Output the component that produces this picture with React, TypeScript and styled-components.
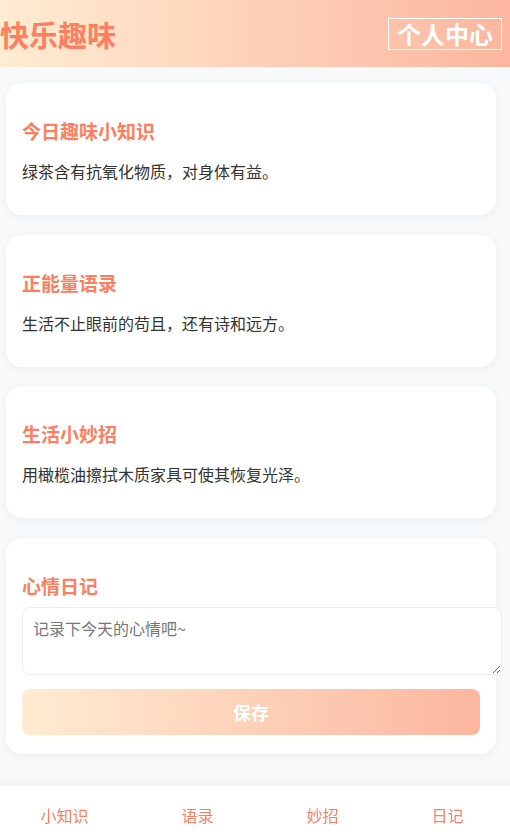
import React, { useState } from 'react';
import styled, { createGlobalStyle } from 'styled-components';

const GlobalStyle = createGlobalStyle`
  html, body {
    margin: 0;
    padding: 0;
    background: #f8f9fb;
    font-family: 'Noto Sans CJK SC', 'Noto Sans', sans-serif;
    color: #333;
  }
`;

type Tip = {
  title: string;
  text: string;
};

const tips: Tip[] = [
  { title: '今日趣味小知识', text: '绿茶含有抗氧化物质，对身体有益。' },
  { title: '正能量语录', text: '生活不止眼前的苟且，还有诗和远方。' },
  { title: '生活小妙招', text: '用橄榄油擦拭木质家具可使其恢复光泽。' },
];

const navs = ['小知识', '语录', '妙招', '日记'];

const App = () => {
  const [diary, setDiary] = useState('');

  return (
    <Page>
      <GlobalStyle />
      <Header>
        <Logo>快乐趣味</Logo>
        <ProfileButton>个人中心</ProfileButton>
      </Header>

      <Main>
        {tips.map((tip) => (
          <Card key={tip.title}>
            <CardTitle>{tip.title}</CardTitle>
            <CardText>{tip.text}</CardText>
          </Card>
        ))}

        <Card $diary>
          <CardTitle>心情日记</CardTitle>
          <DiaryInput
            placeholder="记录下今天的心情吧~"
            value={diary}
            onChange={(e) => setDiary(e.target.value)}
          />
          <SaveButton>保存</SaveButton>
        </Card>
      </Main>

      <BottomNav>
        {navs.map((name) => (
          <NavItem key={name}>{name}</NavItem>
        ))}
      </BottomNav>
    </Page>
  );
};

export default App;

/* Styles */

const Page = styled.div`
  padding-bottom: 30px;
`;

const Header = styled.header`
  height: 67px;
  padding: 0 8px 0 0;
  display: flex;
  align-items: center;
  justify-content: space-between;
  background: linear-gradient(to right, #ffecd2, #fcb69f);
`;

const Logo = styled.h1`
  margin: 1px 0 0;
  font-size: 29px;
  font-weight: 700;
  color: #ff7e5f;
`;

const ProfileButton = styled.button`
  height: 32px;
  padding: 0 8px;
  border: 1px solid #fff;
  background: transparent;
  color: #fff;
  font-family: inherit;
  font-size: 24px;
  font-weight: 700;
  line-height: 30px;
  cursor: pointer;
`;

const Main = styled.main`
  padding: 16px 14px 0 6px;
  display: flex;
  flex-direction: column;
  gap: 19.5px;
`;

const Card = styled.section<{ $diary?: boolean }>`
  background: #fff;
  border-radius: 16px;
  box-shadow: 0 2px 10px rgba(0, 0, 0, 0.05);
  padding: 35px 16px ${(p) => (p.$diary ? '19px' : '33px')};
`;

const CardTitle = styled.h3`
  margin: 0 0 8px;
  font-size: 19px;
  font-weight: 700;
  line-height: 26px;
  color: #ff7e5f;
`;

const CardText = styled.p`
  margin: 16px 0 0;
  font-size: 16px;
  line-height: 22px;
  color: #333;
`;

const DiaryInput = styled.textarea`
  display: block;
  width: 100%;
  height: 46px;
  padding: 10px;
  border: 1px solid #eee;
  border-radius: 8px;
  font-family: inherit;
  font-size: 16px;
  line-height: 20px;
  color: #333;
  resize: vertical;
  outline: none;

  &::placeholder {
    color: #777;
  }
`;

const SaveButton = styled.button`
  display: block;
  width: 100%;
  height: 46px;
  margin-top: 14px;
  border: none;
  border-radius: 8px;
  background: linear-gradient(to right, #ffecd2, #fcb69f);
  color: #fff;
  font-family: inherit;
  font-size: 18px;
  font-weight: 700;
  cursor: pointer;
`;

const BottomNav = styled.nav`
  position: fixed;
  left: -6px;
  right: 0;
  bottom: 0;
  height: 54px;
  padding-top: 4px;
  box-sizing: border-box;
  display: flex;
  align-items: center;
  justify-content: space-around;
  background: #fff;
  box-shadow: 0 -2px 10px rgba(0, 0, 0, 0.05);
`;

const NavItem = styled.a`
  font-size: 16px;
  color: #ff7e5f;
  text-decoration: none;
  cursor: pointer;
`;
